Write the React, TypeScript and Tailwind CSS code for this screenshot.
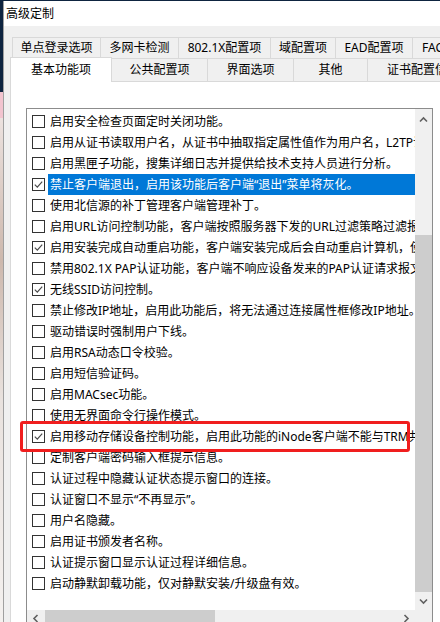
import React from "react";

type Item = { text: React.ReactNode; checked?: boolean; selected?: boolean };

const items: Item[] = [
  { text: "启用安全检查页面定时关闭功能。" },
  { text: "启用从证书读取用户名，从证书中抽取指定属性值作为用户名，L2TP认证时使用该用户名。" },
  { text: "启用黑匣子功能，搜集详细日志并提供给技术支持人员进行分析。" },
  { text: "禁止客户端退出，启用该功能后客户端“退出”菜单将灰化。", checked: true, selected: true },
  { text: "使用北信源的补丁管理客户端管理补丁。" },
  { text: "启用URL访问控制功能，客户端按照服务器下发的URL过滤策略过滤报文。" },
  { text: "启用安装完成自动重启功能，客户端安装完成后会自动重启计算机，使配置生效。", checked: true },
  { text: "禁用802.1X PAP认证功能，客户端不响应设备发来的PAP认证请求报文。" },
  { text: "无线SSID访问控制。", checked: true },
  { text: "禁止修改IP地址，启用此功能后，将无法通过连接属性框修改IP地址。" },
  { text: "驱动错误时强制用户下线。" },
  { text: "启用RSA动态口令校验。" },
  { text: "启用短信验证码。" },
  { text: "启用MACsec功能。" },
  { text: "使用无界面命令行操作模式。" },
  { text: "启用移动存储设备控制功能，启用此功能的iNode客户端不能与TRM共存。", checked: true },
  { text: "定制客户端密码输入框提示信息。" },
  { text: "认证过程中隐藏认证状态提示窗口的连接。" },
  { text: "认证窗口不显示“不再显示”。" },
  { text: "用户名隐藏。" },
  { text: "启用证书颁发者名称。" },
  { text: "认证提示窗口显示认证过程详细信息。" },
  { text: "启动静默卸载功能，仅对静默安装/升级盘有效。" },
];

function CheckBox({ checked }: { checked?: boolean }) {
  return (
    <span className="w-[13px] h-[13px] border border-[#333333] bg-white shrink-0 flex items-center justify-center">
      {checked && (
        <svg width="11" height="11" viewBox="0 0 11 11">
          <path d="M1.8 5.6 L4.3 8.1 L9.2 2.6" fill="none" stroke="#4a4a4a" strokeWidth="1.2" />
        </svg>
      )}
    </span>
  );
}

function Chevron({ dir }: { dir: "up" | "down" | "left" | "right" }) {
  const d =
    dir === "up"
      ? "M1 5.5 L4.5 2 L8 5.5"
      : dir === "down"
      ? "M1 2.5 L4.5 6 L8 2.5"
      : dir === "left"
      ? "M5.5 1 L2 4.5 L5.5 8"
      : "M2.5 1 L6 4.5 L2.5 8";
  return (
    <svg width="9" height="9" viewBox="0 0 9 9">
      <path d={d} fill="none" stroke="#606060" strokeWidth="1.6" />
    </svg>
  );
}

const tab = "h-full shrink-0 flex items-center justify-center border-t border-r border-[#d9d9d9] whitespace-nowrap overflow-hidden";

export default function App() {
  return (
    <div className="relative w-[440px] h-[622px] overflow-hidden flex bg-[#0e2440] text-[12px] text-black font-['Noto_Sans','Noto_Sans_CJK_SC',sans-serif]">
      <div className="w-[3px] shrink-0 h-full bg-[linear-gradient(to_bottom,#0e2440_0px,#0e2440_92px,#f2c4cf_92px,#f2c4cf_118px,#ece2df_118px,#cdb8ad_260px,#e9e2de_400px,#f4f1ef_622px)]" />
      <div className="flex-1 min-w-0 mt-px flex flex-col border-l border-[#a0a0a0] bg-[#f0f0f0]">
        <div className="h-[25px] bg-white flex items-center pl-[2px] shrink-0 leading-none">高级定制</div>
        <div className="flex-1 flex flex-col pt-[11px] pl-[8px] min-h-0">
          {/* tab row 1 */}
          <div className="flex h-[21px] shrink-0">
            <div className={`${tab} border-l w-[89px]`}>单点登录选项</div>
            <div className={`${tab} w-[78px]`}>多网卡检测</div>
            <div className={`${tab} w-[92px]`}>802.1X配置项</div>
            <div className={`${tab} w-[65px]`}>域配置项</div>
            <div className={`${tab} w-[77px]`}>EAD配置项</div>
            <div className={`${tab} w-[100px] justify-start pl-[9px]`}>FAC配置项</div>
          </div>
          {/* tab row 2 */}
          <div className="flex items-start h-[23px] shrink-0 relative z-10">
            <div className="-ml-[2px] -mt-px h-[25px] w-[102px] shrink-0 bg-white border-l border-t border-r border-[#d9d9d9] flex items-center justify-center pb-[1px]">
              基本功能项
            </div>
            <div className={`${tab} h-[23px] w-[96px]`}>公共配置项</div>
            <div className={`${tab} h-[23px] w-[86px]`}>界面选项</div>
            <div className={`${tab} h-[23px] w-[74px]`}>其他</div>
            <div className={`${tab} h-[23px] w-[100px] justify-start pl-[19px]`}>证书配置信息</div>
          </div>
          {/* panel */}
          <div className="-ml-[2px] flex-1 bg-white border-l border-t border-[#d9d9d9] pt-[26px] pl-[15px]">
            <div className="w-[407px] border border-[#8c8c8c] bg-white grid grid-cols-[388px_17px] grid-rows-[501px_17px]">
              <div className="overflow-hidden pt-[2px]">
                {items.map((it, i) => (
                  <div key={i} className="h-[21px] flex items-center pl-[5px] whitespace-nowrap">
                    <CheckBox checked={it.checked} />
                    <span
                      className={`ml-[3px] pl-[2px] flex-1 h-[21px] flex items-center leading-[21px] ${
                        it.selected ? "bg-[#0078d7] text-white" : ""
                      }`}
                    >
                      {it.text}
                    </span>
                  </div>
                ))}
              </div>
              <div className="bg-[#f0f0f0] flex flex-col">
                <div className="h-[22px] flex items-center justify-center">
                  <Chevron dir="up" />
                </div>
                <div className="h-[104px]" />
                <div className="h-[357px] bg-[#cdcdcd]" />
                <div className="h-[18px] flex items-center justify-center">
                  <Chevron dir="down" />
                </div>
              </div>
              <div className="bg-[#f0f0f0] flex h-[17px]">
                <div className="w-[18px] flex items-center justify-center">
                  <Chevron dir="left" />
                </div>
                <div className="w-[170px] bg-[#cdcdcd]" />
                <div className="flex-1" />
                <div className="w-[18px] flex items-center justify-center">
                  <Chevron dir="right" />
                </div>
              </div>
              <div className="bg-[#f0f0f0]" />
            </div>
          </div>
        </div>
      </div>
      <div className="absolute left-[20px] top-[421px] w-[390px] h-[31px] border-[3px] border-[#f01e1e] rounded-[3px] pointer-events-none" />
    </div>
  );
}
